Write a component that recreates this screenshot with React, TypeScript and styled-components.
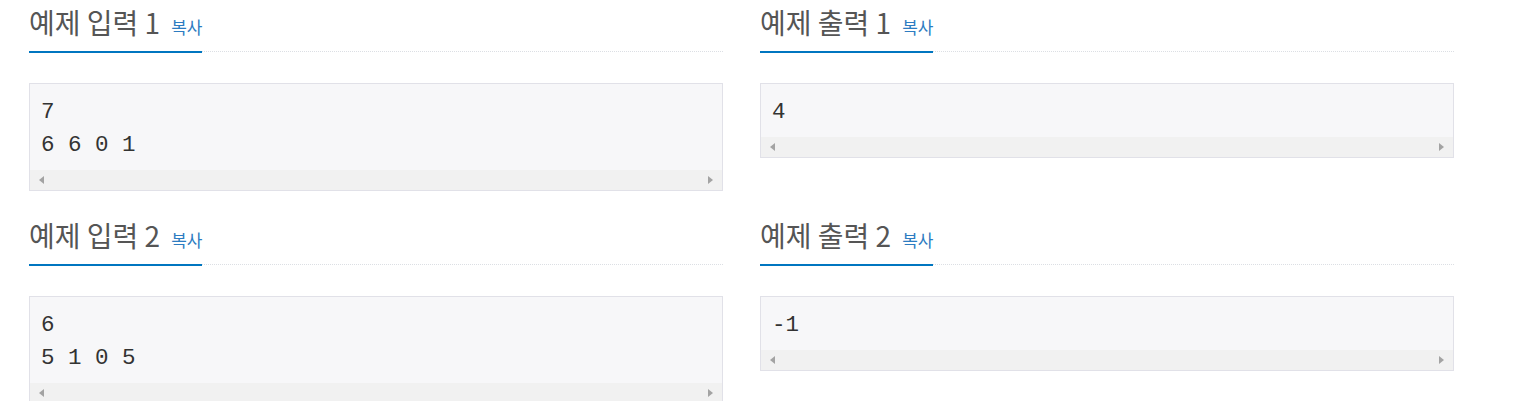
import React from 'react'
import styled, { createGlobalStyle } from 'styled-components'

const GlobalStyle = createGlobalStyle`
  body {
    margin: 0;
    background: #fff;
    font-family: "Open Sans", "Noto Sans CJK KR", sans-serif;
  }
`

const Page = styled.div`
  display: grid;
  grid-template-columns: 694px 694px;
  column-gap: 37px;
  row-gap: 22px;
  padding-left: 29px;
  width: 1540px;
  box-sizing: border-box;
`

const Section = styled.section`
  display: flex;
  flex-direction: column;
`

const Headline = styled.div`
  display: flex;
  border-bottom: 1px dotted #dcdfe4;
  margin-bottom: 31px;
`

const Title = styled.h2`
  display: flex;
  align-items: baseline;
  height: 45px;
  margin: 0 0 -2px 0;
  padding-bottom: 6px;
  border-bottom: 2px solid #0076c0;
  font-family: "Noto Sans CJK KR", sans-serif;
  font-size: 28px;
  font-weight: 400;
  line-height: 45px;
  color: #555;
`

const CopyButton = styled.a`
  margin-left: 11px;
  font-size: 17px;
  line-height: 1;
  color: #2d7cc1;
  cursor: pointer;
`

const SampleBox = styled.div`
  display: flex;
  flex-direction: column;
  background: #f7f7f9;
  border: 1px solid #e1e1e8;
`

const Pre = styled.pre`
  margin: 0;
  padding: 12px 11px 8px;
  font-family: "Liberation Mono", monospace;
  font-size: 22.5px;
  line-height: 33px;
  color: #333;
  overflow: hidden;
`

const Scrollbar = styled.div`
  height: 20px;
  background: #f1f1f1;
  display: flex;
  align-items: center;
  justify-content: space-between;
  padding: 0 9px;
`

const Arrow = styled.span<{ $dir: 'left' | 'right' }>`
  width: 0;
  height: 0;
  border-top: 4px solid transparent;
  border-bottom: 4px solid transparent;
  ${({ $dir }) =>
    $dir === 'left'
      ? 'border-right: 5px solid #a3a3a3;'
      : 'border-left: 5px solid #a3a3a3;'}
`

const samples = [
  { title: '예제 입력 1', text: '7\n6 6 0 1' },
  { title: '예제 출력 1', text: '4' },
  { title: '예제 입력 2', text: '6\n5 1 0 5' },
  { title: '예제 출력 2', text: '-1' },
]

export default function App() {
  return (
    <>
      <GlobalStyle />
      <Page>
        {samples.map((s) => (
          <Section key={s.title}>
            <Headline>
              <Title>
                {s.title}
                <CopyButton>복사</CopyButton>
              </Title>
            </Headline>
            <SampleBox>
              <Pre>{s.text}</Pre>
              <Scrollbar>
                <Arrow $dir="left" />
                <Arrow $dir="right" />
              </Scrollbar>
            </SampleBox>
          </Section>
        ))}
      </Page>
    </>
  )
}
